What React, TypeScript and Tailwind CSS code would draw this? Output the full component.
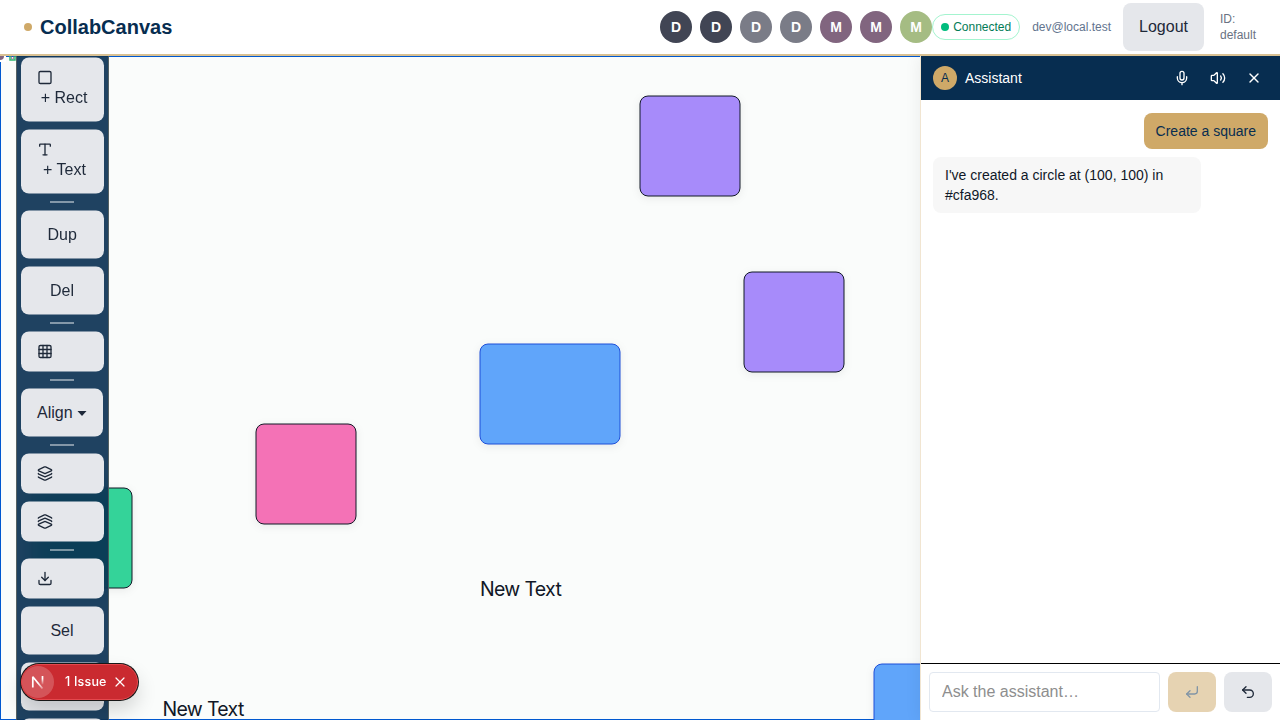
import type { ReactNode } from "react";
import {
  CornerDownLeft,
  Download,
  Grid3x3,
  Layers,
  Mic,
  Square,
  Type,
  Undo2,
  Volume2,
  X,
} from "lucide-react";

const members = [
  { initial: "D", color: "bg-[#414554]" },
  { initial: "D", color: "bg-[#414554]" },
  { initial: "D", color: "bg-[#7a7c87]" },
  { initial: "D", color: "bg-[#7a7c87]" },
  { initial: "M", color: "bg-[#81657f]" },
  { initial: "M", color: "bg-[#81657f]" },
  { initial: "M", color: "bg-[#a5bc83]" },
];

function Header() {
  return (
    <header className="relative z-20 flex h-14 shrink-0 items-center justify-between border-b-2 border-[#d9c193] bg-white px-6">
      <div className="flex items-center gap-2">
        <span className="size-2 rounded-full bg-[#cfa968]" />
        <h1 className="text-xl font-bold text-[#072d50]">CollabCanvas</h1>
      </div>
      <div className="flex items-center">
        <div className="flex gap-2">
          {members.map((m, i) => (
            <span
              key={i}
              className={`flex size-8 items-center justify-center rounded-full text-sm font-bold text-white ${m.color}`}
            >
              {m.initial}
            </span>
          ))}
        </div>
        <span className="flex items-center gap-1 rounded-full border border-emerald-200 bg-white px-2 py-1 text-xs text-emerald-700">
          <span className="size-2 rounded-full bg-emerald-500" />
          Connected
        </span>
        <span className="ml-3 text-xs text-slate-500">dev@local.test</span>
        <button className="ml-3 h-12 rounded-lg bg-gray-200 px-4 text-base text-gray-800">Logout</button>
        <span className="ml-4 w-9 text-xs text-gray-500">ID: default</span>
      </div>
    </header>
  );
}

function Tool({ children }: { children?: ReactNode }) {
  return (
    <button className="min-h-10 w-full shrink-0 rounded-lg bg-gray-200 px-4 py-3 text-base whitespace-nowrap text-gray-800">
      {children}
    </button>
  );
}

function Divider() {
  return <span className="ml-[29px] h-px w-6 shrink-0 self-start bg-white/90" />;
}

function Toolbar() {
  return (
    <nav className="absolute -top-1 left-4 flex w-[93px] translate-y-[0.5px] flex-col items-center gap-2 border border-[#cfa968]/30 bg-[#072d50]/90 p-1 backdrop-blur-md">
      <Tool>
        <Square size={16} />
        <span className="mr-[0.5px] ml-[3.5px]">+ Rect</span>
      </Tool>
      <Tool>
        <Type size={16} />
        <span className="ml-1">+ Text</span>
      </Tool>
      <Divider />
      <Tool>
        <span className="mr-[0.5px]">Dup</span>
      </Tool>
      <Tool>
        <span className="mr-px">Del</span>
      </Tool>
      <Divider />
      <Tool>
        <Grid3x3 size={16} />
      </Tool>
      <Divider />
      <div className="w-full pr-px">
        <button className="flex w-full items-center gap-1 rounded-lg bg-gray-200 px-4 py-3 text-base text-gray-800">
          Align
          <svg width="10" height="6" viewBox="0 0 10 6" className="mt-0.5 shrink-0" fill="currentColor">
            <path d="M0.500 0.500H9.500L5 5.500Z" />
          </svg>
        </button>
      </div>
      <Divider />
      <Tool>
        <Layers size={16} />
      </Tool>
      <Tool>
        <Layers size={16} className="rotate-180" />
      </Tool>
      <Divider />
      <Tool>
        <Download size={16} />
      </Tool>
      <Tool>
        <span className="mr-px">Sel</span>
      </Tool>
      <div className="h-12 w-full shrink-0 rounded-lg bg-gray-200" />
      <div className="h-12 w-full shrink-0 rounded-lg bg-gray-200" />
    </nav>
  );
}

const shapes = [
  { x: 32, y: 432, w: 100, h: 100, fill: "#34d399", stroke: "#111827" },
  { x: 640, y: 40, w: 100, h: 100, fill: "#a78bfa", stroke: "#111827" },
  { x: 744, y: 216, w: 100, h: 100, fill: "#a78bfa", stroke: "#111827" },
  { x: 480, y: 288, w: 140, h: 100, fill: "#60a5fa", stroke: "#1d4ed8" },
  { x: 256, y: 368, w: 100, h: 100, fill: "#f472b6", stroke: "#111827" },
  { x: 874, y: 608, w: 140, h: 100, fill: "#60a5fa", stroke: "#1d4ed8" },
];

function Board() {
  return (
    <svg className="block h-full w-full" viewBox="0 0 920 664">
      <rect x="0.5" y="0.5" width="940" height="663" fill="none" stroke="#0058d0" />
      {shapes.map((s, i) => (
        <rect
          key={i}
          x={s.x}
          y={s.y}
          width={s.w}
          height={s.h}
          rx={8}
          fill={s.fill}
          stroke={s.stroke}
          className="drop-shadow-[0_2px_4px_rgba(0,0,0,0.07)]"
        />
      ))}
      <g fill="#111827" fontSize="19.500" fontFamily="Inter, sans-serif" letterSpacing="-0.680">
        <text x="480" y="540">New Text</text>
        <text x="162.500" y="660">New Text</text>
      </g>
      <rect x="0" y="0" width="6" height="6" fill="#fff" />
      <circle cx="0" cy="0" r="4" fill="#81657f" />
      <path d="M10 0V4H15V0" fill="none" stroke="#2eb872" strokeWidth="1.500" />
      <path d="M11.500 0V3H13.500V0" fill="none" stroke="#81657f" strokeWidth="0.700" />
    </svg>
  );
}

function IssuePill() {
  return (
    <div className="absolute bottom-5 left-[21px] flex h-9 w-[117px] items-center rounded-full border border-[#e5484d] bg-[#ca2a30] text-white shadow-[0_0_0_1px_#171717,0_10px_20px_rgba(0,0,0,0.16)]">
      <span className="flex size-8 shrink-0 items-center justify-center rounded-full bg-white/20">
        <svg width="14" height="14" viewBox="0 0 14 14" fill="none">
          <defs>
            <linearGradient id="stem" x1="0" y1="1" x2="0" y2="10" gradientUnits="userSpaceOnUse">
              <stop offset="0.3" stopColor="#fff" />
              <stop offset="1" stopColor="#fff" stopOpacity="0" />
            </linearGradient>
            <linearGradient id="diagonal" x1="7" y1="8" x2="12" y2="14" gradientUnits="userSpaceOnUse">
              <stop stopColor="#fff" />
              <stop offset="1" stopColor="#fff" stopOpacity="0.3" />
            </linearGradient>
          </defs>
          <path d="M1.800 12.500V1.800L11.500 13.500" stroke="url(#diagonal)" strokeWidth="1.700" strokeLinejoin="bevel" />
          <path d="M11.500 1V9.500" stroke="url(#stem)" strokeWidth="1.700" />
        </svg>
      </span>
      <span className="ml-[11px] font-[Inter,sans-serif] text-[12.5px] font-medium tracking-[0.2px] whitespace-nowrap">
        1 Issue
      </span>
      <X size={16} strokeWidth={1.8} className="absolute right-[9px]" />
    </div>
  );
}

function Assistant() {
  return (
    <aside className="relative z-10 flex w-[360px] shrink-0 flex-col border-l border-[#f1e5d1] bg-white shadow-[0_0_16px_rgba(0,0,0,0.07)]">
      <div className="flex h-11 items-center gap-2 bg-[#072d50] px-3 text-sm text-white">
        <span className="flex size-6 items-center justify-center rounded-full bg-[#cfa968] text-xs text-[#072d50]">A</span>
        <span className="flex-1">Assistant</span>
        <button className="p-1.5">
          <Mic size={16} />
        </button>
        <button className="p-1.5">
          <Volume2 size={16} />
        </button>
        <button className="p-1.5">
          <X size={16} />
        </button>
      </div>
      <div className="flex flex-1 flex-col gap-2 px-3 pt-[13px] text-sm">
        <p className="self-end rounded-lg bg-[#cfa968] px-3 py-2 text-[#072d50]">Create a square</p>
        <p className="w-[268px] rounded-lg bg-[#f7f7f7] px-3 py-2 text-gray-900">
          I've created a circle at (100, 100) in #cfa968.
        </p>
      </div>
      <form className="flex gap-2 border-t border-black p-2">
        <input
          className="h-10 w-[231px] rounded border border-slate-200 px-3 text-base placeholder:text-[#8e8e8e]"
          placeholder="Ask the assistant…"
        />
        <button type="button" className="flex w-12 items-center justify-center rounded-lg bg-[#cfa968] text-[#072d50] opacity-50">
          <CornerDownLeft size={16} />
        </button>
        <button type="button" className="flex w-12 items-center justify-center rounded-lg bg-gray-200 text-gray-800">
          <Undo2 size={16} />
        </button>
      </form>
    </aside>
  );
}

export default function App() {
  return (
    <div className="flex h-[720px] w-[1280px] flex-col overflow-hidden bg-white font-['Liberation_Sans',sans-serif]">
      <Header />
      <main className="flex min-h-0 flex-1">
        <section className="relative min-w-0 flex-1 overflow-hidden bg-[#fafcfb]">
          <Board />
          <Toolbar />
          <IssuePill />
        </section>
        <Assistant />
      </main>
    </div>
  );
}
